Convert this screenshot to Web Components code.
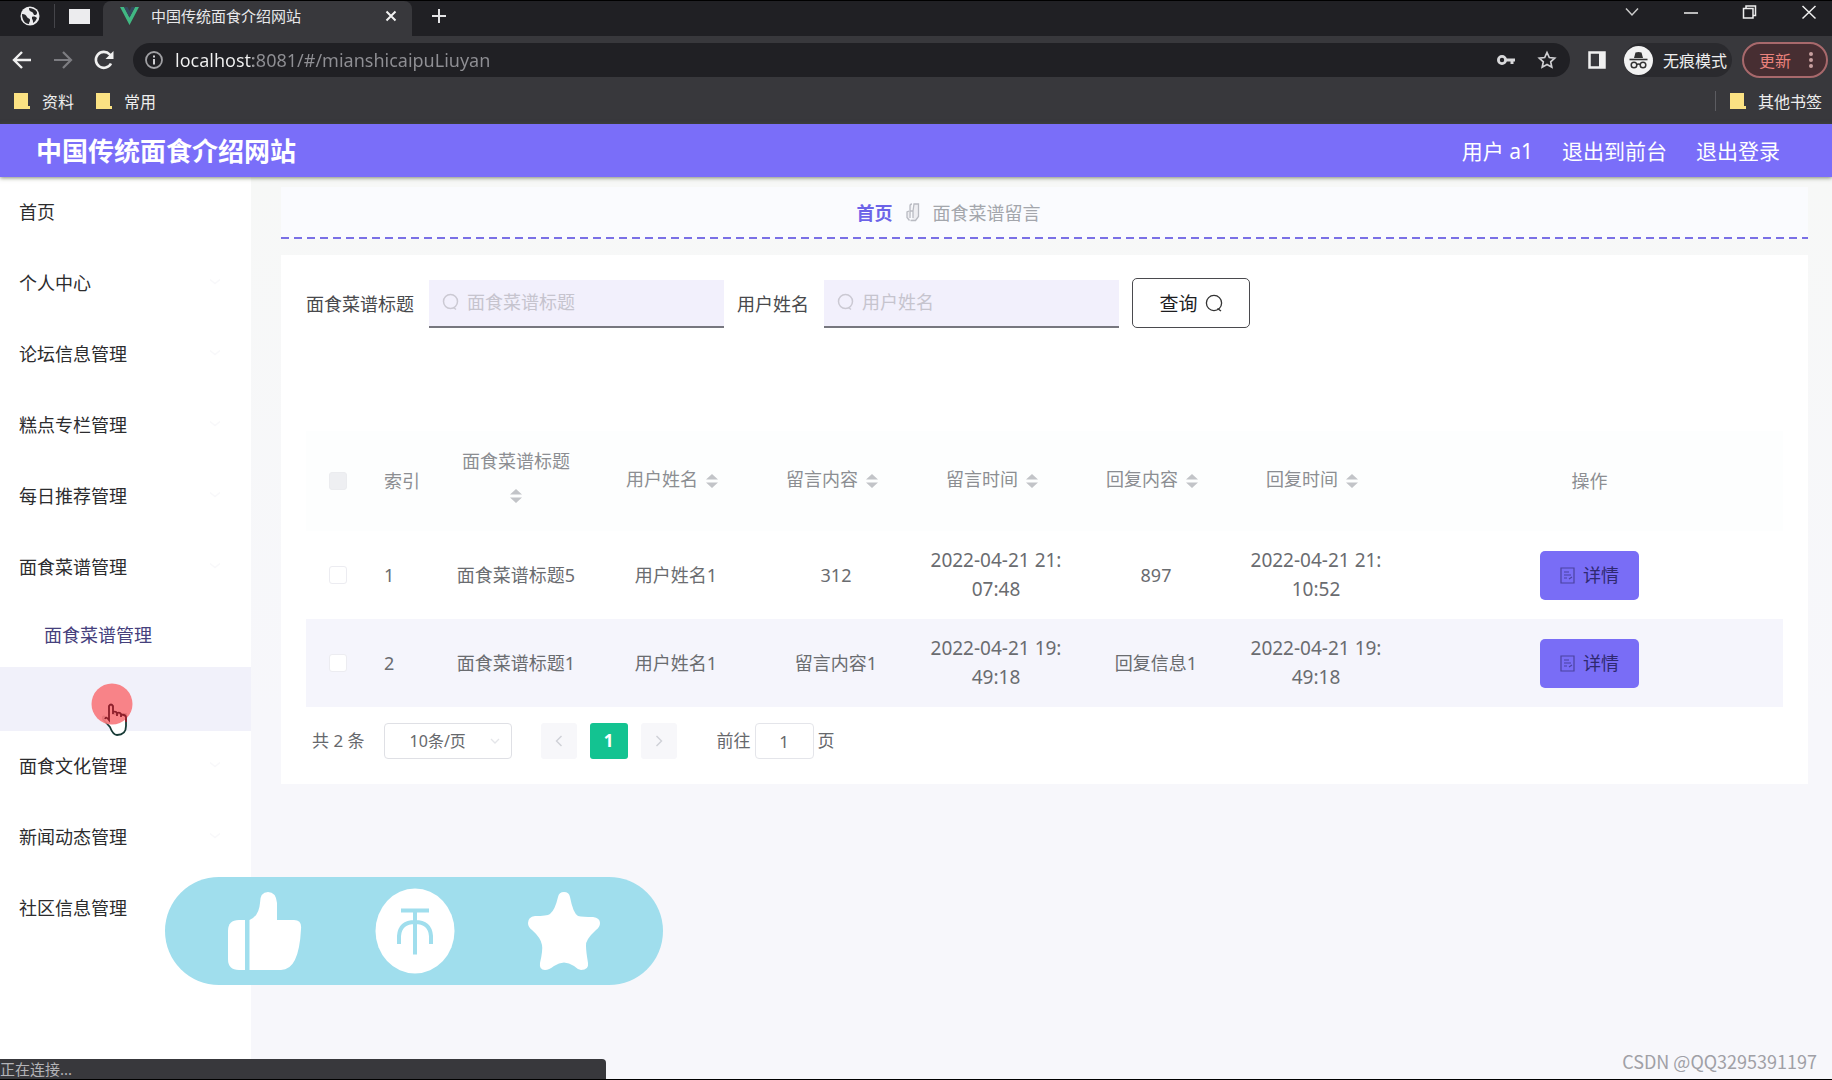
<!DOCTYPE html>
<html lang="zh-CN">
<head>
<meta charset="utf-8">
<title>中国传统面食介绍网站</title>
<style>
  html, body { margin: 0; height: 100%; }
  body {
    font-family: "Noto Sans", "Noto Sans CJK SC", sans-serif;
    font-size: 18px; color: #333; background: #f7f7f9; overflow: hidden;
  }
</style>
</head>
<body>
<demo-window></demo-window>
<script>
const define = (name, html, setup) => {
  const t = document.createElement('template');
  t.innerHTML = html;
  customElements.define(name, class extends HTMLElement {
    constructor() {
      super();
      this.attachShadow({ mode: 'open' }).append(t.content.cloneNode(true));
    }
    connectedCallback() { if (setup && !this.ready) { this.ready = true; setup.call(this, this.shadowRoot); } }
  });
};

/* ---------- browser frame ---------- */
define('tab-strip', `
<style>
  :host { display: flex; height: 35px; background: #202024; border-top: 1px solid #000; color: #e8e8ea; }
  svg { display: block; flex: none; }
  .pinned { display: flex; align-items: center; width: 103px; box-sizing: border-box; padding: 0 13px 5px 20px; gap: 14px; }
  .bar { width: 1px; height: 24px; background: #45454a; }
  .blank { width: 21px; height: 15px; background: #ececee; }
  .tab { display: flex; align-items: center; width: 309px; box-sizing: border-box; padding: 0 14px 5px 17px; background: #38383c; border-radius: 8px 8px 0 0; }
  .tab span { flex: 1; margin-left: 12px; font-size: 15px; line-height: 20px; }
  button { border: 0; padding: 0; background: none; color: inherit; display: block; }
  .new { margin: 6px 0 0 18px; height: 18px; }
  .win { display: flex; gap: 41px; margin: 2px 14px 0 auto; height: 18px; }
</style>
<div class="pinned">
  <svg width="20" height="20" viewBox="0 0 20 20"><circle cx="10" cy="10" r="9.5" fill="#ececee"/><path d="M2 8c3 0 4 1 5 3s3 1 3 3-1 2-1 4c-4 0-7-4-7-10zM9 2c0 3 1 3 3 4s1 3 3 3 2-2 2-3c-2-3-5-4-8-4zM12 11c2-1 4 0 5 1-1 2-2 4-4 5 0-2 0-3-1-4z" fill="#26262a"/></svg>
  <i class="bar"></i><i class="blank"></i>
</div>
<div class="tab">
  <svg width="19" height="18" viewBox="0 0 19 18"><path d="M0 0h4l5.500 10.500L15 0h4L9.500 18z" fill="#41b883"/><path d="M4 0h3.500l2 4 2-4H15L9.500 10.500z" fill="#35495e"/></svg>
  <span>中国传统面食介绍网站</span>
  <button aria-label="关闭标签页"><svg width="14" height="14" viewBox="0 0 14 14"><path d="M2.500 2.500l9 9M11.500 2.500l-9 9" stroke="#f2f2f2" stroke-width="2"/></svg></button>
</div>
<button class="new" aria-label="新标签页"><svg width="18" height="18" viewBox="0 0 18 18"><path d="M9 2v14M2 9h14" stroke="#e4e4e6" stroke-width="2"/></svg></button>
<div class="win">
  <button aria-label="搜索标签页"><svg width="18" height="18" viewBox="0 0 18 18"><path d="M3 5.500l6 6.500 6-6.500" fill="none" stroke="#ccc" stroke-width="1.500"/></svg></button>
  <button aria-label="最小化"><svg width="18" height="18" viewBox="0 0 18 18"><path d="M2 10h14" stroke="#eee" stroke-width="1.500"/></svg></button>
  <button aria-label="还原"><svg width="18" height="18" viewBox="0 0 18 18"><path d="M2.500 5.500h9.500v9.500H2.500zM5 5.500v-2.500h9.500v9.500H12" fill="none" stroke="#eee" stroke-width="1.500"/></svg></button>
  <button aria-label="关闭"><svg width="18" height="18" viewBox="0 0 18 18"><path d="M2.500 3l13 12.500M15.500 3l-13 12.500" stroke="#eee" stroke-width="1.500"/></svg></button>
</div>`);

define('address-bar', `
<style>
  :host { display: flex; align-items: center; height: 48px; background: #38383c; color: #eee; padding: 0 4px 0 11px; }
  svg { display: block; flex: none; }
  button { border: 0; padding: 0; background: none; font: inherit; color: inherit; display: flex; align-items: center; }
  .nav { display: flex; gap: 19px; margin-right: 18px; }
  .omni { flex: 1; display: flex; align-items: center; height: 34px; border-radius: 17px; background: #202024; padding: 0 13px 0 11px; }
  input {
    flex: 1; min-width: 0; margin-left: 11px; padding: 0; border: 0; outline: 0; font: inherit; font-size: 18px; line-height: 26px;
    background: linear-gradient(90deg, #f2f2f2 78px, #8f8f94 78px); -webkit-background-clip: text; background-clip: text; -webkit-text-fill-color: transparent;
  }
  .acts { display: flex; gap: 21px; }
  .panel { margin: 0 10px 0 17px; }
  .incog { display: flex; align-items: center; gap: 10px; height: 34px; border-radius: 17px; background: #2a2a2e; padding-right: 5px; font-size: 16px; margin-left: 7px; }
  .update { margin-left: 10px; width: 86px; height: 36px; box-sizing: border-box; border: 2px solid #a8696c; border-radius: 18px; background: #472e32; color: #ea827c; font-size: 16px; padding: 0 12px 0 15px; justify-content: space-between; }
</style>
<div class="nav">
  <button aria-label="后退"><svg width="22" height="22" viewBox="0 0 22 22"><path d="M20 11H3.500M11 3L3 11l8 8" fill="none" stroke="#f0f0f0" stroke-width="2.400"/></svg></button>
  <button aria-label="前进"><svg width="22" height="22" viewBox="0 0 22 22"><path d="M2 11h16.500M11 3l8 8-8 8" fill="none" stroke="#7d7d82" stroke-width="2.200"/></svg></button>
  <button aria-label="刷新"><svg width="22" height="22" viewBox="0 0 22 22"><path d="M18 14.500A8 8 0 1 1 16.800 5.500L18 7" fill="none" stroke="#f0f0f0" stroke-width="2.600"/><path d="M20.500 2v8h-8z" fill="#f0f0f0"/></svg></button>
</div>
<div class="omni">
  <svg width="20" height="20" viewBox="0 0 20 20"><circle cx="10" cy="10" r="8" fill="none" stroke="#a0a0a4" stroke-width="1.800"/><path d="M10 9v5.500M10 5.500v2" stroke="#d0d0d4" stroke-width="2"/></svg>
  <input aria-label="地址" value="localhost:8081/#/mianshicaipuLiuyan">
  <div class="acts">
    <button aria-label="密码"><svg width="20" height="20" viewBox="0 0 20 20"><circle cx="6" cy="10" r="3.600" fill="none" stroke="#d8d8da" stroke-width="2.800"/><path d="M10 10h9M16 10v4" stroke="#d8d8da" stroke-width="3"/></svg></button>
    <button aria-label="收藏"><svg width="20" height="20" viewBox="0 0 20 20"><path d="M10 2.500l2.300 5 5.400.600-4 3.700 1.100 5.400L10 14.500l-4.800 2.700 1.100-5.400-4-3.700 5.400-.600z" fill="none" stroke="#cfcfd2" stroke-width="1.700"/></svg></button>
  </div>
</div>
<button class="panel" aria-label="侧边栏"><svg width="20" height="20" viewBox="0 0 20 20"><path d="M2.500 2.500h15v15h-15z" fill="none" stroke="#f0f0f0" stroke-width="2.500"/><path d="M12 2h6v16h-6z" fill="#f0f0f0"/></svg></button>
<div class="incog">
  <svg width="29" height="29" viewBox="0 0 29 29"><circle cx="14.500" cy="14.500" r="14.500" fill="#f2f2f2"/><path d="M10 12l1.500-5.500q3-1 6 0L19 12z" fill="#333"/><path d="M5.500 13.500h18" stroke="#333" stroke-width="1.600"/><g fill="none" stroke="#333" stroke-width="1.500"><circle cx="10" cy="19" r="2.800"/><circle cx="19" cy="19" r="2.800"/><path d="M12.800 18.500q1.700-1 3.400 0"/></g></svg>
  <span>无痕模式</span>
</div>
<button class="update"><span>更新</span><svg width="6" height="20" viewBox="0 0 6 20"><g fill="#c8a0a0"><circle cx="3" cy="4" r="2"/><circle cx="3" cy="10" r="2"/><circle cx="3" cy="16" r="2"/></g></svg></button>`);

define('bookmark-item', `
<style>
  :host { display: flex; align-items: center; gap: 12px; color: #eee; font-size: 16px; }
  svg { display: block; }
  a { color: inherit; text-decoration: none; }
</style>
<svg width="16" height="18" viewBox="0 0 16 18"><path d="M0 1h14v13h2v3H0z" fill="#fbe283"/></svg>
<a href="#"><slot></slot></a>`);

define('bookmark-bar', `
<style>
  :host { display: flex; align-items: center; height: 40px; box-sizing: border-box; padding: 0 10px 6px 14px; gap: 22px; background: #38383c; }
  .rest { display: flex; align-items: center; gap: 14px; margin-left: auto; }
  i { width: 1px; height: 20px; background: #5c5c61; }
</style>
<bookmark-item>资料</bookmark-item>
<bookmark-item>常用</bookmark-item>
<div class="rest"><i></i><bookmark-item>其他书签</bookmark-item></div>`);

/* ---------- site ---------- */
define('site-header', `
<style>
  :host { display: flex; align-items: center; height: 53px; padding: 0 52px 0 36px; background: #7a6ef9; color: #fff; box-shadow: 0 1px 4px rgba(80,90,60,.7); position: relative; z-index: 1; }
  h1 { flex: 1; margin: 0; font-size: 26px; font-weight: 700; line-height: 36px; }
  nav { display: flex; gap: 29px; font-size: 21px; line-height: 30px; }
  a { color: inherit; text-decoration: none; }
</style>
<h1>中国传统面食介绍网站</h1>
<nav><span>用户 a1</span><a href="#">退出到前台</a><a href="#">退出登录</a></nav>`);

define('menu-item', `
<style>
  :host { display: block; }
  a { display: flex; align-items: center; justify-content: space-between; height: 71px; box-sizing: border-box; padding: 0 30px 3px 19px; color: #2c2c2e; text-decoration: none; }
  :host([sub]) a { height: 64px; padding-left: 44px; color: #45407c; }
  :host([active]) a { background: #f1f1fa; }
  :host([sub]) svg, :host([leaf]) svg { display: none; }
  svg { display: block; }
</style>
<a href="#"><slot></slot><svg width="12" height="8" viewBox="0 0 12 8"><path d="M1 1.500l5 4 5-4" fill="none" stroke="#f8f8fa" stroke-width="1.500"/></svg></a>`);

define('side-menu', `
<style>
  :host { display: block; width: 251px; flex: none; background: #fff; }
</style>
<nav>
<menu-item leaf>首页</menu-item>
<menu-item>个人中心</menu-item>
<menu-item>论坛信息管理</menu-item>
<menu-item>糕点专栏管理</menu-item>
<menu-item>每日推荐管理</menu-item>
<menu-item>面食菜谱管理</menu-item>
<menu-item sub>面食菜谱管理</menu-item>
<menu-item sub active></menu-item>
<menu-item>面食文化管理</menu-item>
<menu-item>新闻动态管理</menu-item>
<menu-item>社区信息管理</menu-item>
</nav>`);

define('bread-crumb', `
<style>
  :host {
    display: flex; align-items: center; justify-content: center; gap: 12px; height: 50px; margin-top: 10px; padding: 0 192px 2px 0;
    background: repeating-linear-gradient(90deg, #7a70e6 0 8px, transparent 8px 13px) left bottom / 100% 2px no-repeat, #fafbfe;
  }
  a { color: #6c63e8; font-weight: 700; text-decoration: none; }
  span { color: #a3a6ac; }
  svg { display: block; }
</style>
<a href="#">首页</a>
<svg width="16" height="20" viewBox="0 0 16 20"><path d="M4.500 18.500l-2.500-3V10l2-1M5 16V4q0-2 2-2M5.500 18.500h5l3-4V2H9L8 9v7M8 9H5" fill="#eeeef2" stroke="#b9bbc2" stroke-width="1.300"/></svg>
<span>面食菜谱留言</span>`);

define('search-field', `
<style>
  :host { display: flex; align-items: center; gap: 15px; }
  label { color: #48494c; white-space: nowrap; }
  .box { display: flex; align-items: center; gap: 8px; width: 295px; height: 48px; margin-top: 1px; box-sizing: border-box; padding: 0 13px 2px 13px; background: #f2f0fc; border-bottom: 2px solid #77777f; }
  input { flex: 1; min-width: 0; border: 0; padding: 0; outline: 0; background: none; font: inherit; }
  input::placeholder { color: #c6c4ce; opacity: 1; }
  svg { display: block; flex: none; }
</style>
<label for="q"></label>
<div class="box"><svg width="17" height="18" viewBox="0 0 17 18"><path d="M11.500 14.500l2.500 2" stroke="#cbc9d3" stroke-width="1.500"/><circle cx="8.500" cy="8.500" r="7" fill="none" stroke="#cbc9d3" stroke-width="1.500"/></svg><input id="q"></div>`,
function (r) {
  const name = this.getAttribute('name');
  r.querySelector('label').textContent = name;
  r.querySelector('input').placeholder = name;
});

define('search-bar', `
<style>
  :host { display: flex; align-items: center; gap: 13px; height: 50px; }
  button { display: flex; align-items: center; justify-content: center; gap: 7px; width: 118px; height: 50px; border: 1px solid #4a4a4e; border-radius: 5px; background: #fff; color: #1d1d1f; font: inherit; font-size: 19px; padding: 0; }
</style>
<search-field name="面食菜谱标题"></search-field>
<search-field name="用户姓名"></search-field>
<button>查询<svg width="18" height="18" viewBox="0 0 18 18"><path d="M12.500 14.500l3.500 2.500" stroke="#333" stroke-width="1.400"/><circle cx="9" cy="9" r="7.600" fill="none" stroke="#333" stroke-width="1.300"/></svg></button>`);

define('message-table', `
<style>
  :host { display: block; }
  table { width: 100%; table-layout: fixed; border-collapse: collapse; color: #6a6c70; line-height: 29px; }
  th, td { padding: 0 14px; text-align: center; font-weight: 400; word-break: break-all; vertical-align: middle; }
  thead tr { height: 100px; background: #fdfefe; color: #8c8e92; }
  tbody tr { height: 88px; }
  tbody tr:nth-child(even) { background: #f5f5fc; }
  th:nth-child(2), td:nth-child(2) { text-align: left; }
  td.time { font-size: 19px; }
  .c1 { width: 64px; } .c2 { width: 66px; } .c3 { width: 160px; }
  .sort { display: inline-flex; align-items: center; justify-content: center; width: 28px; height: 40px; vertical-align: middle; }
  input { appearance: none; display: block; width: 18px; height: 18px; margin: 0 auto; border: 1px solid #ececf1; border-radius: 3px; background: #fff; }
  input:disabled { background: #eeeff2; border-color: #ebecef; }
  button { display: inline-flex; align-items: center; justify-content: center; gap: 8px; width: 99px; height: 49px; border: 0; border-radius: 5px; padding: 0; background: #796df6; color: #2f2970; font: inherit; vertical-align: middle; }
  svg { display: block; }
</style>
<table>
  <colgroup><col class="c1"><col class="c2"><col class="c3" span="6"><col></colgroup>
  <thead><tr></tr></thead>
  <tbody></tbody>
</table>`,
function (r) {
  const sort = '<span class="sort"><svg width="12" height="14" viewBox="0 0 12 14"><path d="M6 0l6 5.500H0zM6 14l6-5.500H0z" fill="#c2c4c8"/></svg></span>';
  const heads = ['面食菜谱标题', '用户姓名', '留言内容', '留言时间', '回复内容', '回复时间'];
  r.querySelector('thead tr').innerHTML =
    '<th><input type="checkbox" aria-label="全选" disabled></th><th>索引</th>' +
    heads.map(h => `<th>${h}${sort}</th>`).join('') + '<th>操作</th>';
  const rows = [
    ['1', '面食菜谱标题5', '用户姓名1', '312', '2022-04-21 21:07:48', '897', '2022-04-21 21:10:52'],
    ['2', '面食菜谱标题1', '用户姓名1', '留言内容1', '2022-04-21 19:49:18', '回复信息1', '2022-04-21 19:49:18']
  ];
  const doc = '<svg width="15" height="17" viewBox="0 0 15 17"><path d="M1 1h13v15H1zM4 5h5M4 8h7M4 11h3M9 12l3-2" fill="none" stroke="#4b43a0" stroke-width="1.200"/></svg>';
  r.querySelector('tbody').innerHTML = rows.map(c =>
    `<tr><td><input type="checkbox" aria-label="选择第${c[0]}行"></td>` +
    c.map((v, i) => `<td${i === 4 || i === 6 ? ' class="time"' : ''}>${v}</td>`).join('') +
    `<td><button>${doc}详情</button></td></tr>`).join('');
});

define('page-nav', `
<style>
  :host { display: flex; align-items: center; height: 36px; font-size: 17px; line-height: 24px; color: #66686c; padding-left: 6px; }
  .total { margin-right: 19px; }
  .size { display: grid; align-items: center; width: 128px; height: 36px; margin-right: 29px; }
  .size > * { grid-area: 1 / 1; }
  .size svg { justify-self: end; margin-right: 12px; pointer-events: none; }
  select { appearance: none; width: 100%; height: 100%; border: 1px solid #dfe0e5; border-radius: 4px; background: #fff; color: inherit; font: inherit; font-size: 16px; padding: 0 0 0 25px; }
  button { width: 36px; height: 36px; border: 0; border-radius: 3px; padding: 0; display: grid; place-items: center; background: #f7f7fa; color: inherit; font: inherit; margin-right: 13px; }
  button.on { width: 38px; background: #13c391; color: #fff; font-weight: 700; }
  button.next { margin-right: 40px; }
  .go { display: flex; align-items: center; gap: 4px; }
  input { width: 59px; height: 36px; box-sizing: border-box; border: 1px solid #e4e5ea; border-radius: 4px; background: #fff; color: inherit; font: inherit; text-align: center; padding: 0; }
</style>
<span class="total">共 2 条</span>
<div class="size"><select aria-label="每页条数"><option>10条/页</option></select><svg width="10" height="7" viewBox="0 0 10 7"><path d="M1 1l4 4 4-4" fill="none" stroke="#e4e5e9" stroke-width="1.300"/></svg></div>
<button aria-label="上一页"><svg width="8" height="12" viewBox="0 0 8 12"><path d="M6.500 1l-5 5 5 5" fill="none" stroke="#cfd1d6" stroke-width="1.400"/></svg></button>
<button class="on">1</button>
<button class="next" aria-label="下一页"><svg width="8" height="12" viewBox="0 0 8 12"><path d="M1.500 1l5 5-5 5" fill="none" stroke="#cfd1d6" stroke-width="1.400"/></svg></button>
<div class="go"><label for="p">前往</label><input id="p" value="1"><span>页</span></div>`);

/* ---------- layers over the page ---------- */
define('reaction-pill', `
<style>
  :host { display: flex; align-items: center; justify-content: space-between; width: 498px; height: 108px; box-sizing: border-box; padding: 0 62px; border-radius: 54px; background: #a0deed; }
  svg { display: block; }
</style>
<svg width="75" height="80" viewBox="0 0 75 80" fill="#fff"><path d="M18 29H12Q1 29 1 40V68Q1 79 12 79H18z"/><path d="M22.500 79V29Q32 25 33 12Q33 1 41 1T50 12V29H67Q75 29 74 38Q72 79 54 79z"/></svg>
<svg width="80" height="86" viewBox="0 0 80 86"><ellipse cx="40" cy="43" rx="39.500" ry="42.500" fill="#fff"/><path d="M26 22.500h28M40 22.500v44M24 56V48Q25 34 40 34T56 48V56" fill="none" stroke="#a0deed" stroke-width="4"/></svg>
<svg width="74" height="80" viewBox="0 0 74 80" fill="#fff"><path d="M37 1Q42 1 43 6Q46 22 51 25Q56 26 66 26Q73 27 73 32Q73 36 69 39Q58 49 59 55Q59 60 61 72Q62 79 54 79Q50 78 47 75Q37 68 27 75Q22 79 18 79Q12 79 13 72Q16 59 15 54Q14 47 5 39Q1 36 1 32Q1 26 8 25Q20 25 23 23Q28 19 31 6Q32 1 37 1z"/></svg>`);

define('click-pointer', `
<style>:host { display: block; } svg { display: block; }</style>
<svg width="42" height="54" viewBox="0 0 42 54"><path d="M19 44l-7-8q-1-4 3-2l3 3V24q1-4 4 0v7h13v12q0 9-9 9-4 0-7-8z" fill="#fff" stroke="#163a35" stroke-width="1.800"/><circle cx="21" cy="21" r="20.500" fill="#f97a7e" fill-opacity=".92"/><path d="M14 36q1-3 4 1V23q2-3 4 0v8m0-2q3-1 4 1v3m0-3q3-1 4 1v3m0-2q4-1 5 2v5" fill="none" stroke="#8d1f2b" stroke-width="1.800"/></svg>`);

define('load-status', `
<style>
  :host { display: block; width: 606px; background: #38383c; border-radius: 0 4px 0 0; color: #b4b4b8; font-size: 15px; line-height: 20px; }
</style><slot></slot>`);

define('demo-window', `
<style>
  :host { display: flex; flex-direction: column; min-height: 100vh; box-sizing: border-box; border-bottom: 1px solid #000; position: relative; }
  .page { flex: 1; display: flex; }
  main { flex: 1; min-width: 0; padding: 0 24px 0 30px; background: linear-gradient(#f7f8f7, #f7f7fb 60%); }
  .card { margin-top: 16px; padding: 23px 25px 25px; background: #fff; }
  message-table { margin: 103px 0 16px; }
  reaction-pill { position: absolute; left: 165px; top: 877px; }
  click-pointer { position: absolute; left: 91px; top: 683px; }
  load-status { position: absolute; left: 0; bottom: 0; }
  .mark { position: absolute; right: 15px; bottom: 5px; font: 18px/26px "Noto Sans CJK SC", sans-serif; color: #a0a0a6; }
</style>
<tab-strip></tab-strip>
<address-bar></address-bar>
<bookmark-bar></bookmark-bar>
<site-header></site-header>
<div class="page">
  <side-menu></side-menu>
  <main>
    <bread-crumb></bread-crumb>
    <section class="card">
      <search-bar></search-bar>
      <message-table></message-table>
      <page-nav></page-nav>
    </section>
  </main>
</div>
<click-pointer></click-pointer>
<reaction-pill></reaction-pill>
<load-status>正在连接...</load-status>
<div class="mark">CSDN @QQ3295391197</div>`);
</script>
</body>
</html>
